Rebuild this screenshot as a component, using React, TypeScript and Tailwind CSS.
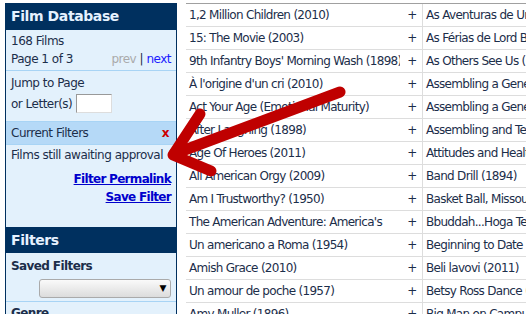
const left = [
  '1,2 Million Children (2010)',
  '15: The Movie (2003)',
  "9th Infantry Boys' Morning Wash (1898)",
  "À l'origine d'un cri (2010)",
  'Act Your Age (Emotional Maturity)',
  'After Laughing (1898)',
  'Age Of Heroes (2011)',
  'All American Orgy (2009)',
  'Am I Trustworthy? (1950)',
  "The American Adventure: America's",
  'Un americano a Roma (1954)',
  'Amish Grace (2010)',
  'Un amour de poche (1957)',
  'Amy Muller (1896)',
];

const right = [
  'As Aventuras de Um Homem',
  'As Férias de Lord Byron',
  'As Others See Us (1953)',
  'Assembling a Generator',
  'Assembling a Generator',
  'Assembling and Testing',
  'Attitudes and Health',
  'Band Drill (1894)',
  'Basket Ball, Missouri',
  'Bbuddah...Hoga Tere Baap',
  'Beginning to Date (1953)',
  'Beli lavovi (2011)',
  'Betsy Ross Dance (1903)',
  'Big Man on Campus',
];

function Sidebar() {
  return (
    <div className="w-[172px] shrink-0 border-x border-[#00305f] bg-[#e3f1fc] text-[12px] tracking-[-0.5px] text-[#1c2e4a]">
      <div className="h-[27px] bg-[#00305f] px-[5px] text-[14px] font-bold leading-[27px] tracking-[-0.4px] text-[#e6f2ff]">
        Film Database
      </div>
      <div className="border-b border-[#a8d4f5] px-[5px] pt-[2px] pb-[2px] leading-[18px]">
        <div>168 Films</div>
        <div className="flex justify-between">
          <span>Page 1 of 3</span>
          <span>
            <span className="text-[#aaaaaa]">prev</span> | <span className="text-[#1a1aff]">next</span>
          </span>
        </div>
      </div>
      <div className="px-[5px] pt-[3px] pb-[8px] leading-[18px]">
        <div>Jump to Page</div>
        <div className="mt-[2px] flex h-[19px] items-center gap-[4px]">
          <span>or Letter(s)</span>
          <span className="h-[19px] w-[36px] border border-[#999] border-r-[#ddd] border-b-[#ddd] bg-white" />
        </div>
      </div>
      <div className="flex h-[24px] items-center justify-between border-y border-[#a8d4f5] bg-[#b5d9f7] pl-[5px] pr-[7px]">
        <span>Current Filters</span>
        <span className="text-[12px] font-bold text-[#cc0000]">x</span>
      </div>
      <div className="h-[82px] px-[5px] pt-[1px] leading-[18px]">
        <div className="whitespace-nowrap">Films still awaiting approval</div>
        <div className="mt-[6px] text-right font-bold tracking-[-0.7px] text-[#0000cc] underline">Filter Permalink</div>
        <div className="text-right font-bold tracking-[-0.7px] text-[#0000cc] underline">Save Filter</div>
      </div>
      <div className="h-[26px] bg-[#00305f] px-[5px] text-[14px] font-bold leading-[26px] tracking-[-0.4px] text-[#e6f2ff]">
        Filters
      </div>
      <div className="border-b border-[#a8d4f5] px-[5px] pt-[4px] pb-[3px]">
        <div className="font-bold leading-[18px] tracking-[-0.6px]">Saved Filters</div>
        <div className="mt-[4px] flex justify-end">
          <div className="flex h-[19px] w-[132px] items-center justify-end rounded-[3px] border border-[#aaa] bg-gradient-to-b from-[#fafafa] to-[#dcdcdc] pr-[4px] text-[9px] text-black">
            ▼
          </div>
        </div>
      </div>
      <div className="px-[5px] pt-[2px] font-bold leading-[18px] tracking-[-0.6px]">Genre</div>
    </div>
  );
}

function FilmTable() {
  return (
    <div className="ml-[9px] w-[600px] shrink-0 border-t border-[#a0a0a0] text-[12px] tracking-[-0.7px] text-[#1c2e4a]">
      {left.map((name, i) => (
        <div key={i} className="grid h-[23px] grid-cols-[214px_23px_1fr] border-b border-[#dddddd] leading-[22px]">
          <div className="overflow-hidden whitespace-nowrap pl-[3px]">{name}</div>
          <div className="border-r border-[#dddddd] pl-[2px] text-center">+</div>
          <div className="overflow-hidden whitespace-nowrap pl-[3px]">{right[i]}</div>
        </div>
      ))}
    </div>
  );
}

function Arrow() {
  return (
    <svg className="pointer-events-none absolute inset-0" width="526" height="314" viewBox="0 0 526 314">
      <g fill="none" stroke="#bf0000" strokeWidth="11" strokeLinecap="round" strokeLinejoin="round">
        <line x1="174" y1="154" x2="340" y2="92" />
        <polyline points="200,114 173,155 211,171" />
      </g>
    </svg>
  );
}

export default function App() {
  return (
    <div className="relative h-[314px] w-[526px] overflow-hidden bg-white font-['DejaVu_Sans',sans-serif]">
      <div className="flex pt-[3px] pl-[5px]">
        <Sidebar />
        <FilmTable />
      </div>
      <Arrow />
    </div>
  );
}
